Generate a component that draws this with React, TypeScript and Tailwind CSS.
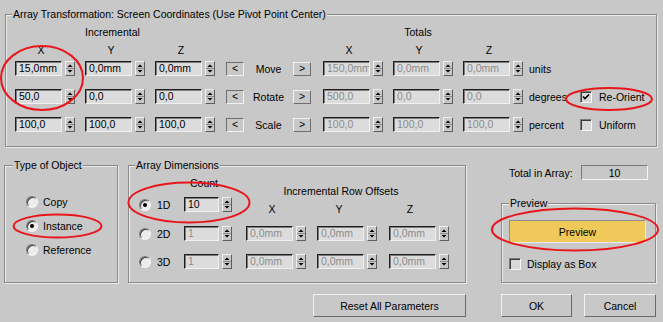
import React from "react";

type FieldProps = { v: string; w?: string; dim?: boolean };

function Field({ v, w = "w-[47px]", dim = false }: FieldProps) {
  return (
    <div
      className={`${w} h-[15px] flex items-center pl-[3px] overflow-hidden whitespace-nowrap bg-[#dcdcdc] border border-t-[#1e1e1e] border-l-[#1e1e1e] border-r-[#f0f0f0] border-b-[#f0f0f0] shadow-[inset_1px_1px_0_#7c7c7c] leading-none ${
        dim ? "text-[#8c8c8c]" : "text-black"
      }`}
    >
      {v}
    </div>
  );
}

function Spinner() {
  return (
    <div className="w-[10px] h-[15px] shrink-0 border border-t-[#f0f0f0] border-l-[#f0f0f0] border-r-[#5e5e5e] border-b-[#5e5e5e] flex items-center justify-center">
      <svg width="8" height="13" viewBox="0 0 8 13">
        <polygon points="1.5,5 6.5,5 4,2.5" fill="#000" />
        <line x1="0" y1="6.5" x2="8" y2="6.5" stroke="#8c8c8c" strokeWidth="1" />
        <polygon points="1.5,8 6.5,8 4,10.5" fill="#000" />
      </svg>
    </div>
  );
}

function SpinField({ v, w, dim, cls = "" }: FieldProps & { cls?: string }) {
  return (
    <div className={`flex items-center shrink-0 ${cls}`}>
      <Field v={v} w={w} dim={dim} />
      <div className="ml-[3px]">
        <Spinner />
      </div>
    </div>
  );
}

function Radio({ on = false }: { on?: boolean }) {
  return (
    <div className="w-[12px] h-[12px] shrink-0 rounded-full bg-[#ececec] border border-t-[#7a7a7a] border-l-[#7a7a7a] border-r-[#f6f6f6] border-b-[#f6f6f6] shadow-[inset_1px_1px_0_#3c3c3c] flex items-center justify-center">
      {on && <div className="w-[4px] h-[4px] rounded-full bg-black" />}
    </div>
  );
}

function Check({ on = false }: { on?: boolean }) {
  return (
    <div className="w-[12px] h-[12px] shrink-0 bg-[#d8d8d8] border border-t-[#7a7a7a] border-l-[#7a7a7a] border-r-[#f6f6f6] border-b-[#f6f6f6] shadow-[inset_1px_1px_0_#3c3c3c] flex items-center justify-center">
      {on && (
        <svg width="8" height="8" viewBox="0 0 8 8">
          <path d="M1 3.5 L3 5.5 L7 1.5" stroke="#000" strokeWidth="1.6" fill="none" />
        </svg>
      )}
    </div>
  );
}

function ArrowBtn({ t, sunken = false }: { t: string; sunken?: boolean }) {
  return (
    <div
      className={`w-[18px] h-[14px] shrink-0 flex items-center justify-center leading-none border ${
        sunken
          ? "border-t-[#6e6e6e] border-l-[#6e6e6e] border-r-[#f2f2f2] border-b-[#f2f2f2]"
          : "border-t-[#f2f2f2] border-l-[#f2f2f2] border-r-[#6e6e6e] border-b-[#6e6e6e]"
      }`}
    >
      {t}
    </div>
  );
}

function Btn({ t, cls }: { t: string; cls: string }) {
  return (
    <div
      className={`${cls} h-[23px] flex items-center justify-center border border-t-[#f2f2f2] border-l-[#f2f2f2] border-r-[#6a6a6a] border-b-[#6a6a6a]`}
    >
      {t}
    </div>
  );
}

function TransformRow({
  a,
  label,
  totals,
  unit,
  extra,
}: {
  a: string[];
  label: string;
  totals: string[];
  unit: string;
  extra?: React.ReactNode;
}) {
  return (
    <div className="flex items-center h-[15px] pl-[9px]">
      <SpinField v={a[0]} />
      <SpinField v={a[1]} cls="ml-[10px]" />
      <SpinField v={a[2]} cls="ml-[10px]" />
      <div className="ml-[11px]">
        <ArrowBtn t="<" sunken />
      </div>
      <div className="w-[49px] text-center">{label}</div>
      <ArrowBtn t=">" />
      <SpinField v={totals[0]} dim cls="ml-[12px]" />
      <SpinField v={totals[1]} dim cls="ml-[10px]" />
      <SpinField v={totals[2]} dim cls="ml-[10px]" />
      <div className="ml-[6px] w-[51px]">{unit}</div>
      {extra}
    </div>
  );
}

export default function App() {
  return (
    <div className="relative w-[663px] h-[322px] overflow-hidden bg-[#c8c8c8] text-black text-[10.5px] leading-[14px] font-['Liberation_Sans',Arial,sans-serif] select-none">
      {/* Top group */}
      <div className="relative ml-[5px] mt-[14px] w-[652px] h-[133px] border border-[#8a8a8a] shadow-[inset_1px_1px_0_#ececec,1px_1px_0_#ececec] pt-[10px]">
        <div className="absolute left-[6px] top-[-8px] px-[1px] bg-[#c8c8c8] whitespace-nowrap">
          Array Transformation: Screen Coordinates (Use Pivot Point Center)
        </div>
        <div className="flex h-[14px] pl-[9px]">
          <div className="ml-[70px] w-[54px] text-center">Incremental</div>
          <div className="ml-[252px] w-[54px] text-center">Totals</div>
        </div>
        <div className="flex h-[14px] pl-[9px] mt-[4px]">
          <div className="w-[52px] text-center">X</div>
          <div className="ml-[18px] w-[52px] text-center">Y</div>
          <div className="ml-[18px] w-[52px] text-center">Z</div>
          <div className="ml-[116px] w-[52px] text-center">X</div>
          <div className="ml-[18px] w-[52px] text-center">Y</div>
          <div className="ml-[18px] w-[52px] text-center">Z</div>
        </div>
        <div className="flex flex-col gap-[13px] mt-[4px]">
          <TransformRow
            a={["15,0mm", "0,0mm", "0,0mm"]}
            label="Move"
            totals={["150,0mm", "0,0mm", "0,0mm"]}
            unit="units"
          />
          <TransformRow
            a={["50,0", "0,0", "0,0"]}
            label="Rotate"
            totals={["500,0", "0,0", "0,0"]}
            unit="degrees"
            extra={
              <div className="flex items-center">
                <Check on />
                <span className="ml-[7px]">Re-Orient</span>
              </div>
            }
          />
          <TransformRow
            a={["100,0", "100,0", "100,0"]}
            label="Scale"
            totals={["100,0", "100,0", "100,0"]}
            unit="percent"
            extra={
              <div className="flex items-center">
                <Check />
                <span className="ml-[7px]">Uniform</span>
              </div>
            }
          />
        </div>
      </div>

      {/* Lower section */}
      <div className="flex ml-[4px] mt-[18px]">
        {/* Type of Object */}
        <div className="relative w-[114px] h-[118px] border border-[#8a8a8a] shadow-[inset_1px_1px_0_#ececec,1px_1px_0_#ececec] pt-[29px] pl-[21px]">
          <div className="absolute left-[8px] top-[-8px] px-[1px] bg-[#c8c8c8] whitespace-nowrap">Type of Object</div>
          <div className="flex flex-col gap-[10px]">
            <div className="flex items-center h-[14px]">
              <Radio />
              <span className="ml-[5px]">Copy</span>
            </div>
            <div className="flex items-center h-[14px]">
              <Radio on />
              <span className="ml-[5px]">Instance</span>
            </div>
            <div className="flex items-center h-[14px]">
              <Radio />
              <span className="ml-[5px]">Reference</span>
            </div>
          </div>
        </div>

        {/* Array Dimensions */}
        <div className="relative ml-[10px] w-[338px] h-[118px] border border-[#8a8a8a] shadow-[inset_1px_1px_0_#ececec,1px_1px_0_#ececec] pt-[10px]">
          <div className="absolute left-[6px] top-[-8px] px-[1px] bg-[#c8c8c8] whitespace-nowrap">Array Dimensions</div>
          <div className="flex h-[21px] items-start">
            <div className="ml-[55px] w-[40px] text-center">Count</div>
            <div className="ml-[42px] mt-[8px] w-[150px] text-center whitespace-nowrap">Incremental Row Offsets</div>
          </div>
          <div className="flex items-center h-[15px] pl-[10px]">
            <Radio on />
            <span className="ml-[6px] w-[27px]">1D</span>
            <SpinField v="10" w="w-[35px]" />
            <div className="flex self-start mt-[5px]">
              <div className="ml-[20px] w-[40px] text-center">X</div>
              <div className="ml-[27px] w-[40px] text-center">Y</div>
              <div className="ml-[31px] w-[40px] text-center">Z</div>
            </div>
          </div>
          <div className="flex items-center h-[15px] pl-[10px] mt-[14px]">
            <Radio />
            <span className="ml-[6px] w-[27px]">2D</span>
            <SpinField v="1" w="w-[35px]" dim />
            <SpinField v="0,0mm" dim cls="ml-[14px]" />
            <SpinField v="0,0mm" dim cls="ml-[11px]" />
            <SpinField v="0,0mm" dim cls="ml-[12px]" />
          </div>
          <div className="flex items-center h-[15px] pl-[10px] mt-[13px]">
            <Radio />
            <span className="ml-[6px] w-[27px]">3D</span>
            <SpinField v="1" w="w-[35px]" dim />
            <SpinField v="0,0mm" dim cls="ml-[14px]" />
            <SpinField v="0,0mm" dim cls="ml-[11px]" />
            <SpinField v="0,0mm" dim cls="ml-[12px]" />
          </div>
        </div>

        {/* Right column */}
        <div className="ml-[35px] w-[155px] flex flex-col">
          <div className="flex items-center h-[15px] pl-[8px] pr-[8px]">
            <span>Total in Array:</span>
            <div className="ml-auto w-[67px] h-[15px] flex items-center justify-center border border-t-[#7a7a7a] border-l-[#7a7a7a] border-r-[#f4f4f4] border-b-[#f4f4f4]">
              10
            </div>
          </div>
          <div className="relative mt-[23px] h-[80px] border border-[#8a8a8a] shadow-[inset_1px_1px_0_#ececec,1px_1px_0_#ececec] pt-[16px] pl-[7px]">
            <div className="absolute left-[7px] top-[-8px] px-[1px] bg-[#c8c8c8] whitespace-nowrap">Preview</div>
            <div className="w-[137px] h-[23px] flex items-center justify-center bg-[#efc95a] border border-t-[#8e8e8e] border-l-[#8e8e8e] border-r-[#eaeaea] border-b-[#eaeaea]">
              Preview
            </div>
            <div className="flex items-center mt-[14px]">
              <Check />
              <span className="ml-[6px]">Display as Box</span>
            </div>
          </div>
        </div>
      </div>

      {/* Bottom buttons */}
      <div className="flex mt-[11px]">
        <Btn t="Reset All Parameters" cls="ml-[313px] w-[153px]" />
        <Btn t="OK" cls="ml-[35px] w-[71px]" />
        <Btn t="Cancel" cls="ml-[12px] w-[72px]" />
      </div>

      {/* Red annotation ellipses */}
      <svg className="absolute inset-0 pointer-events-none" width="663" height="322" viewBox="0 0 663 322">
        <g fill="none" stroke="#e8151b" strokeWidth="2">
          <ellipse cx="42" cy="78" rx="41" ry="32" />
          <ellipse cx="609" cy="99" rx="43" ry="11" />
          <ellipse cx="57.5" cy="226" rx="44" ry="11.5" />
          <ellipse cx="189" cy="202.5" rx="60.5" ry="20" />
          <ellipse cx="575" cy="229.5" rx="83" ry="21" />
        </g>
      </svg>
    </div>
  );
}
